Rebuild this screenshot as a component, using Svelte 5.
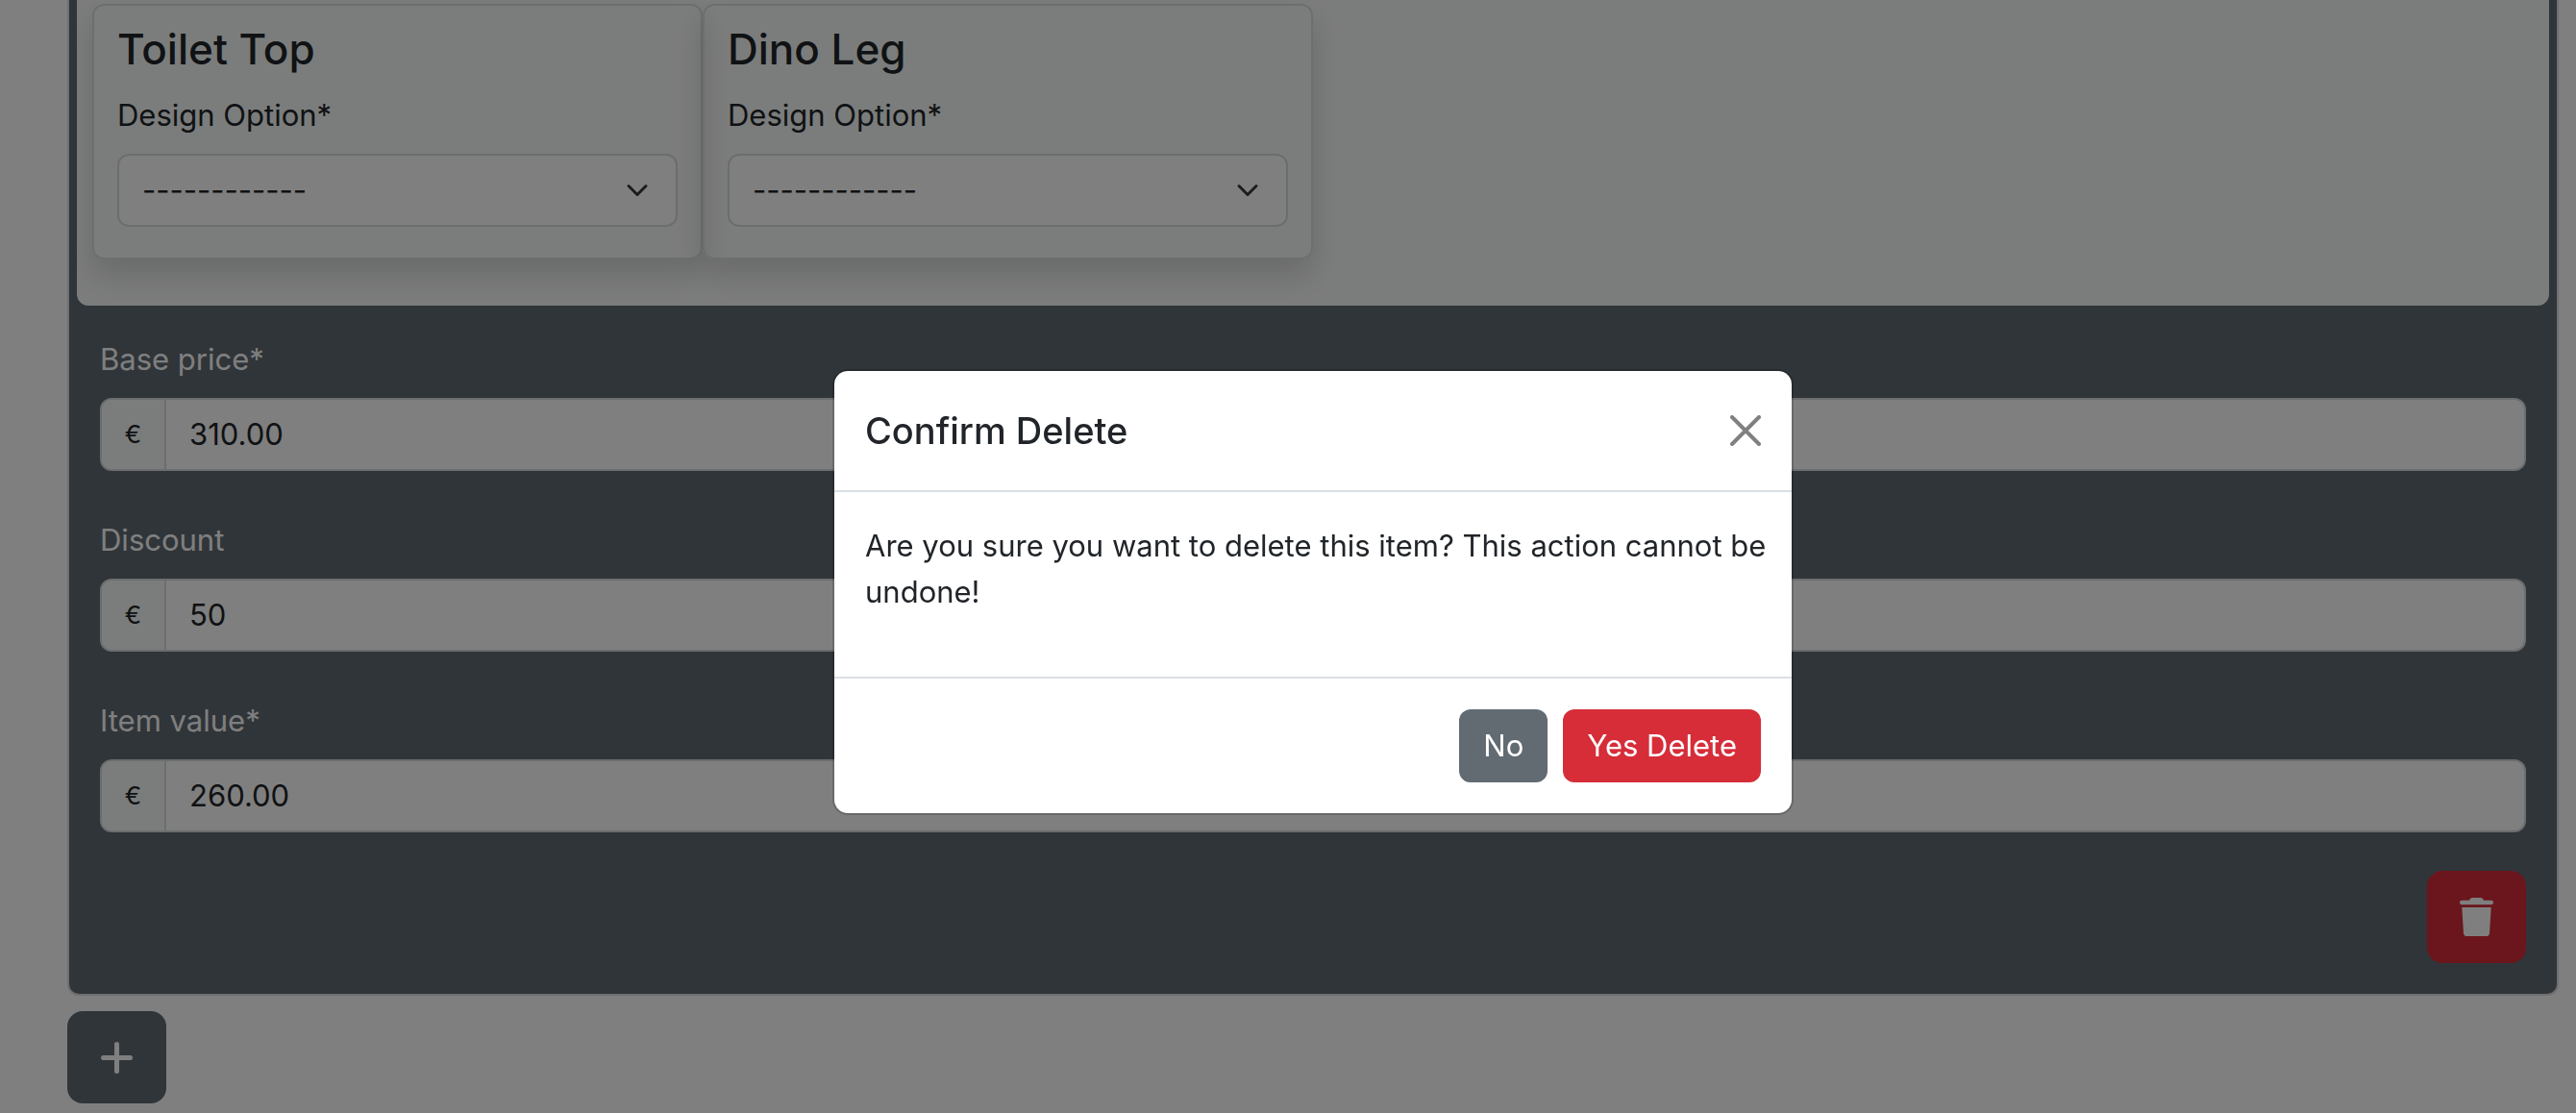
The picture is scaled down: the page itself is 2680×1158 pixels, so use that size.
<script>
  const parts = [
    { id: 'toilet-top', title: 'Toilet Top' },
    { id: 'dino-leg', title: 'Dino Leg' }
  ];

  let amounts = $state([
    { id: 'base-price', label: 'Base price*', value: '310.00' },
    { id: 'discount', label: 'Discount', value: '50' },
    { id: 'item-value', label: 'Item value*', value: '260.00' }
  ]);
</script>

<main class="page">
  <section class="item">
    <div class="parts">
      {#each parts as part (part.id)}
        <article class="card">
          <h4>{part.title}</h4>
          <label for={part.id}>Design Option*</label>
          <div class="select">
            <select id={part.id}>
              <option>------------</option>
            </select>
            <svg viewBox="0 0 16 16" aria-hidden="true">
              <path d="m2 5 6 6 6-6" />
            </svg>
          </div>
        </article>
      {/each}
    </div>

    <div class="fields">
      {#each amounts as amount (amount.id)}
        <div class="field">
          <label for={amount.id}>{amount.label}</label>
          <div class="group">
            <span class="currency">€</span>
            <input id={amount.id} type="text" inputmode="decimal" bind:value={amount.value} />
          </div>
        </div>
      {/each}
      <button class="square remove" type="button" aria-label="Delete item">
        <svg class="trash" viewBox="0 0 105 120" aria-hidden="true">
          <path d="M7 8h23q3-8 9-8h27q6 0 9 8h23a7 7 0 0 1 0 14H7A7 7 0 0 1 7 8z" />
          <path d="M7 30h91l-5 81q-1 9-9 9H21q-8 0-9-9z" />
        </svg>
      </button>
    </div>
  </section>

  <button class="square add" type="button" aria-label="Add item">
    <svg class="plus" viewBox="0 0 33 33" aria-hidden="true">
      <path d="M16.5 2.5v28M2.5 16.5h28" />
    </svg>
  </button>
</main>

<div class="backdrop">
  <div class="modal" role="dialog" aria-modal="true" aria-labelledby="confirm-title">
    <header>
      <h5 id="confirm-title">Confirm Delete</h5>
      <button class="close" type="button" aria-label="Close">
        <svg viewBox="0 0 16 16" aria-hidden="true">
          <path d="M1 1l14 14M15 1L1 15" />
        </svg>
      </button>
    </header>
    <p>Are you sure you want to delete this item? This action cannot be undone!</p>
    <footer>
      <button class="btn no" type="button">No</button>
      <button class="btn yes" type="button">Yes Delete</button>
    </footer>
  </div>
</div>

<style>
  :global(body) {
    margin: 0;
    background: #fff;
    color: #212529;
    font-family: Inter, 'Liberation Sans', sans-serif;
    font-size: 31px;
    line-height: 48px;
  }

  .page,
  .page *,
  .backdrop,
  .backdrop * {
    box-sizing: border-box;
  }

  h4,
  h5,
  p {
    margin: 0;
    font-weight: 500;
  }

  button,
  input,
  select {
    margin: 0;
    font: inherit;
    color: inherit;
  }

  label {
    display: block;
    margin-bottom: 16px;
  }

  .page {
    padding: 0 18px 10px 70px;
  }

  .item {
    border: 2px solid #dcdee0;
    border-top: 0;
    border-radius: 0 0 12px 12px;
    background: #606a72;
  }

  .parts {
    display: grid;
    grid-template-columns: repeat(4, 1fr);
    margin: 0 8px;
    padding: 4px 16px 48px;
    border-radius: 0 0 12px 12px;
    background: #f7faf8;
    overflow: hidden;
  }

  .card {
    padding: 16px 24px 32px;
    border: 2px solid #d9dde1;
    border-radius: 12px;
    box-shadow: 0 16px 32px rgba(0, 0, 0, 0.15);
  }

  h4 {
    margin-bottom: 16px;
    font-size: 44px;
    line-height: 58px;
  }

  .select {
    display: grid;
    align-items: center;
  }

  .select > * {
    grid-area: 1 / 1;
  }

  select {
    appearance: none;
    width: 100%;
    height: 76px;
    padding: 0 72px 0 24px;
    border: 2px solid #d6dadf;
    border-radius: 12px;
    background: #fff;
  }

  .select svg {
    justify-self: end;
    width: 24px;
    height: 24px;
    margin-right: 30px;
    fill: none;
    stroke: #343a40;
    stroke-width: 2;
    stroke-linecap: round;
    stroke-linejoin: round;
    pointer-events: none;
  }

  .fields {
    display: flex;
    flex-direction: column;
    padding: 32px;
  }

  .field {
    margin-bottom: 48px;
    color: #fff;
  }

  .field:nth-last-child(2) {
    margin-bottom: 40px;
  }

  .group {
    display: flex;
    height: 76px;
    border: 2px solid #d6dadf;
    border-radius: 12px;
    background: #fff;
    color: #212529;
    overflow: hidden;
  }

  .currency {
    display: grid;
    place-items: center;
    width: 67px;
    border-right: 2px solid #d6dadf;
    background: #f7faf8;
    font-size: 26px;
  }

  input {
    flex: 1;
    min-width: 0;
    padding: 0 24px;
    border: 0;
    background: none;
  }

  .square {
    display: grid;
    place-items: center;
    width: 103px;
    height: 96px;
    padding: 0;
    border: 0;
    border-radius: 16px;
  }

  .remove {
    align-self: flex-end;
    background: #d62d39;
  }

  .add {
    margin-top: 16px;
    background: #606a72;
  }

  .trash {
    width: 35px;
    height: 40px;
    fill: #fff;
  }

  .plus {
    width: 33px;
    height: 33px;
    fill: none;
    stroke: #fff;
    stroke-width: 5;
    stroke-linecap: round;
  }

  .backdrop {
    position: fixed;
    inset: 0;
    padding: 384px 18px 0 70px;
    background: rgba(0, 0, 0, 0.5);
  }

  .modal {
    max-width: 1000px;
    margin: 0 auto;
    border: 2px solid rgba(0, 0, 0, 0.175);
    border-radius: 16px;
    background: #fff;
    background-clip: padding-box;
  }

  header {
    display: flex;
    align-items: center;
    justify-content: space-between;
    padding: 32px;
    border-bottom: 2px solid #dadfe4;
  }

  h5 {
    font-size: 38px;
    line-height: 60px;
  }

  .close {
    display: grid;
    padding: 0;
    border: 0;
    background: none;
  }

  .close svg {
    width: 32px;
    height: 32px;
    stroke: #808080;
    stroke-width: 2;
    stroke-linecap: round;
  }

  p {
    padding: 32px 24px 64px 32px;
    font-weight: 400;
  }

  footer {
    display: flex;
    justify-content: flex-end;
    gap: 16px;
    padding: 32px;
    border-top: 2px solid #dadfe4;
  }

  .btn {
    height: 76px;
    padding: 0 25px;
    border: 0;
    border-radius: 12px;
    color: #fff;
  }

  .no {
    background: #626a72;
  }

  .yes {
    background: #d62d39;
  }
</style>
